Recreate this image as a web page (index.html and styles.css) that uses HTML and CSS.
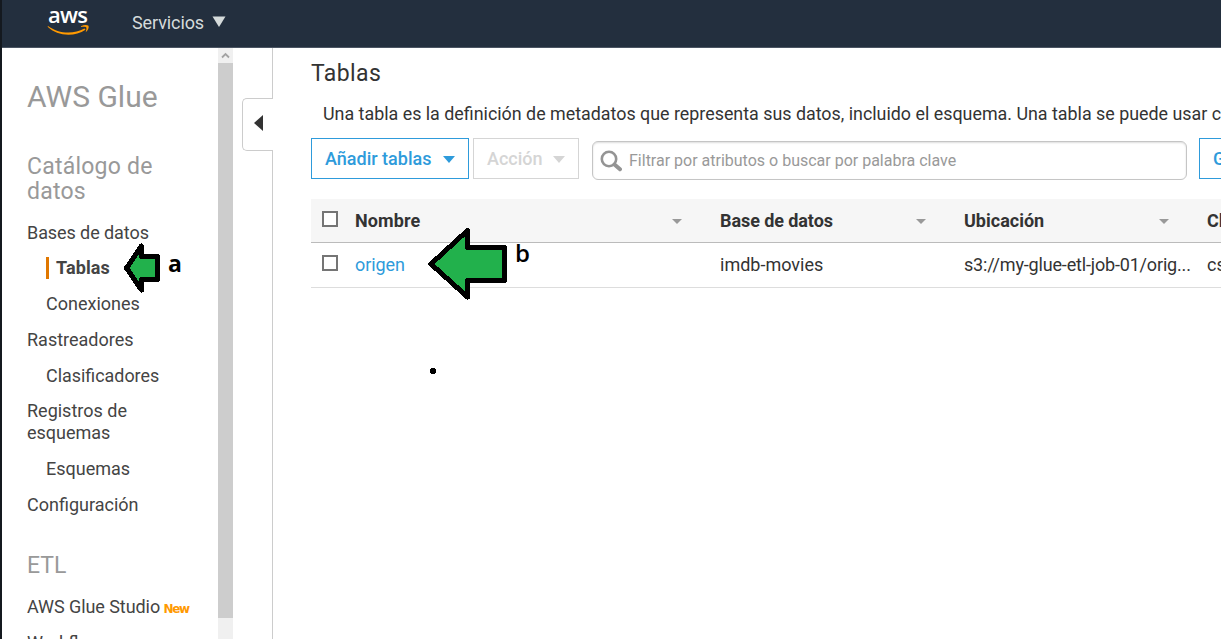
FILE: index.html
```html
<!DOCTYPE html>
<html lang="es">
<head>
<meta charset="utf-8">
<title>AWS Glue</title>
<link rel="stylesheet" href="styles.css">
</head>
<body>
<div class="app">
  <header class="topbar">
    <div class="logo">
      <span class="logo-word">aws</span>
      <svg class="logo-smile" width="44" height="14" viewBox="0 0 44 14"><path d="M1 3 C11 10.500 26 12 37.500 5.500 L38.500 6.700 C27 14.500 10 13 .6 3.800Z" fill="#f90"/><path d="M34 3.200 C37 1.800 40 1.900 41.500 2.700 C42.200 4.200 41 7.500 38.700 9.300 C39.300 6.800 39.800 5 39.200 4.200 C38 3.500 36 3.700 34 3.900Z" fill="#f90"/></svg>
    </div>
    <span class="services">Servicios</span>
    <svg width="14" height="12" viewBox="0 0 14 12"><path d="M0.500 0.500H13.500L7 11Z" fill="#d5dbdb"/></svg>
  </header>
  <div class="body">
    <nav class="sidebar">
      <h1 class="brand">AWS Glue</h1>
      <h2 class="group">Catálogo de<br>datos</h2>
      <a class="item bases">Bases de datos</a>
      <a class="item sub active">Tablas</a>
      <a class="item sub conex">Conexiones</a>
      <a class="item rast">Rastreadores</a>
      <a class="item sub clas">Clasificadores</a>
      <a class="item regs">Registros de<br>esquemas</a>
      <a class="item sub esq">Esquemas</a>
      <a class="item conf">Configuración</a>
      <h2 class="group etl">ETL</h2>
      <a class="item studio">AWS Glue Studio <b class="new">New</b></a>
      <a class="item">Workflows</a>
    </nav>
    <div class="scrollbar">
      <div class="scroll-up"><svg width="9" height="7" viewBox="0 0 9 7"><path d="M1 5.500L4.500 2L8 5.500" fill="none" stroke="#a3a3a3" stroke-width="1.800"/></svg></div>
      <div class="thumb"></div>
    </div>
    <div class="gutter">
      <div class="gutter-top"></div>
      <div class="toggle"><svg width="9" height="16" viewBox="0 0 9 16"><path d="M9 0V16L0 8Z" fill="#333"/></svg></div>
      <div class="gutter-bottom"></div>
    </div>
    <main class="main">
      <h2 class="title">Tablas</h2>
      <p class="intro">Una tabla es la definición de metadatos que representa sus datos, incluido el esquema. Una tabla se puede usar como</p>
      <div class="toolbar">
        <button class="btn add"><span>Añadir tablas</span><svg width="12" height="7" viewBox="0 0 12 7"><path d="M0 0H12L6 7Z" fill="currentColor"/></svg></button>
        <button class="btn action"><span>Acción</span><svg width="12" height="7" viewBox="0 0 12 7"><path d="M0 0H12L6 7Z" fill="currentColor"/></svg></button>
        <div class="search">
          <svg width="22" height="22" viewBox="0 0 22 22"><circle cx="9" cy="9" r="7.200" fill="none" stroke="#949494" stroke-width="2.600"/><path d="M14.500 14.500L20 19.300" stroke="#949494" stroke-width="4" stroke-linecap="round"/></svg>
          <span class="placeholder">Filtrar por atributos o buscar por palabra clave</span>
        </div>
        <button class="btn save"><span>Guardar</span></button>
      </div>
      <div class="table">
        <div class="row head">
          <i class="check"></i>
          <div class="cell"><span class="h-nombre">Nombre</span><i class="sort"></i></div>
          <div class="cell"><span class="h-base">Base de datos</span><i class="sort"></i></div>
          <div class="cell"><span class="h-ubi">Ubicación</span><i class="sort"></i></div>
          <div class="cell">Clasificación</div>
        </div>
        <div class="row">
          <i class="check"></i>
          <div class="cell"><a class="link">origen</a></div>
          <div class="cell"><span class="c-imdb">imdb-movies</span></div>
          <div class="cell"><span class="c-s3">s3://my-glue-etl-job-01/orig...</span></div>
          <div class="cell">csv</div>
        </div>
      </div>
    </main>
  </div>
  <svg class="notes" width="1221" height="639" viewBox="0 0 1221 639" shape-rendering="crispEdges">
    <path d="M126.500 268L141.500 246V256.500H157.500V279.500H141.500V290Z" fill="#22b14c" stroke="#000" stroke-width="5" stroke-linejoin="round"/>
    <path d="M431 264L467.500 230.500V247.500H504.500V280.500H467.500V297Z" fill="#22b14c" stroke="#000" stroke-width="5" stroke-linejoin="round"/>
    <circle cx="433" cy="371" r="3.100"/>
  </svg>
  <span class="mark mark-a">a</span>
  <span class="mark mark-b">b</span>
</div>
</body>
</html>
```
FILE: styles.css
```css
* { box-sizing: border-box; }
body { margin: 0; background: #fff; font: 18px/22px Roboto, "Liberation Sans", sans-serif; color: #333; }
.app { position: relative; width: 1221px; height: 639px; overflow: hidden; border-left: 2px solid #14191f; display: flex; flex-direction: column; }
h1, h2, p { margin: 0; font-weight: 400; }
svg { display: block; flex: none; }
.topbar { height: 48px; flex: none; background: #232f3e; border-bottom: 1px solid #4b5563; display: flex; align-items: flex-start; color: #d5dbdb; }
.logo { width: 44px; margin: 5px 0 0 45px; display: flex; flex-direction: column; }
.logo-word { font: 600 22px/18px "Open Sans", sans-serif; color: #fff; margin-left: 1px; height: 18px; letter-spacing: -.7px; }
.services { margin: 12px 9px 0 41px; width: 71px; white-space: nowrap; letter-spacing: -.1px; }
.topbar > svg { margin-top: 16px; }
.body { flex: 1; display: flex; min-height: 0; }
.sidebar { width: 216px; flex: none; padding: 32px 0 0 25px; overflow: hidden; color: #444; white-space: nowrap; }
.brand { font-size: 30px; line-height: 34px; color: #999; font-weight: 400; margin-bottom: 40px; }
.group { font-size: 23px; line-height: 25px; color: #999; margin-bottom: 18px; letter-spacing: .23px; }
.item { display: block; margin-bottom: 14px; }
.bases { margin-bottom: 13px; letter-spacing: -.08px; }
.sub { margin-left: 19px; }
.active { font-weight: 700; border-left: 3px solid #e07700; padding-left: 7px; letter-spacing: .1px; }
.clas { margin-bottom: 13px; font-size: 17.9px; }
.studio { letter-spacing: -.07px; }
.etl { margin: 37px 0 18px; letter-spacing: 0; }
.new { font: 700 12px/14px "DejaVu Sans", sans-serif; color: #f90; letter-spacing: -1.3px; margin-left: -1px; }
.scrollbar { width: 15px; flex: none; background: #f0f0f0; }
.scroll-up { height: 15px; display: flex; align-items: center; justify-content: center; }
.thumb { height: 555px; background: #cdcdcd; }
.gutter { width: 40px; flex: none; display: flex; flex-direction: column; }
.gutter-top { height: 50px; border-right: 1px solid #ccc; }
.gutter-bottom { flex: 1; border-right: 1px solid #ccc; }
.toggle { height: 53px; margin-left: 9px; border: 1px solid #ccc; border-right: 0; border-radius: 5px 0 0 5px; display: flex; align-items: center; padding: 0 0 3px 11px; }
.main { flex: 1; min-width: 0; padding: 13px 0 0 38px; overflow: hidden; white-space: nowrap; }
.title { font-size: 23px; line-height: 26px; letter-spacing: .4px; }
.intro { margin: 16px 0 13px 12px; font-size: 17.88px; }
.toolbar { display: flex; height: 42px; width: 1000px; }
.btn { font: 500 18px/20px Roboto, sans-serif; height: 41px; background: #fff; border: 1px solid; display: flex; align-items: center; flex: none; padding: 0 13px; justify-content: space-between; }
.btn svg { margin-top: 2px; }
.add { width: 158px; color: #2e9bdb; margin-right: 4px; }
.action { width: 106px; color: #d5d5d5; margin-right: 13px; }
.save { width: 100px; color: #2e9bdb; margin-left: 12px; }
.search { width: 595px; height: 39px; margin-top: 3px; flex: none; border: 1px solid #c5c5c5; border-radius: 6px; box-shadow: inset 0 1px 2px #ddd; display: flex; align-items: center; padding: 1px 7px 0; gap: 7px; color: #999; font-size: 16px; }
.placeholder { margin-top: -1px; }
.table { margin-top: 19px; }
.row { display: grid; grid-template-columns: 44px 365px 244px 243px 200px; height: 45px; align-items: center; border-bottom: 1px solid #ddd; }
.head { height: 44px; background: #f6f6f6; border-color: #bbb; font-weight: 700; }
.check { width: 16px; height: 16px; margin: 0 0 4px 11px; border: 2px solid #757575; background: #fff; }
.cell { display: flex; align-items: center; justify-content: space-between; padding-right: 38px; }
.sort { border: 5px solid transparent; border-top-color: #999; border-bottom: 0; margin-top: 1px; }
.h-nombre { letter-spacing: .1px; }
.h-base { letter-spacing: -.08px; }
.c-s3 { letter-spacing: -.17px; }
.link { color: #2e9bdb; letter-spacing: -.08px; }
.notes { position: absolute; left: -2px; top: 0; }
.mark { position: absolute; font: 600 24px/28px "Open Sans", sans-serif; color: #000; }
.mark-a { left: 166px; top: 249px; font-weight: 700; font-size: 23px; }
.mark-b { left: 513px; top: 239px; }
```
